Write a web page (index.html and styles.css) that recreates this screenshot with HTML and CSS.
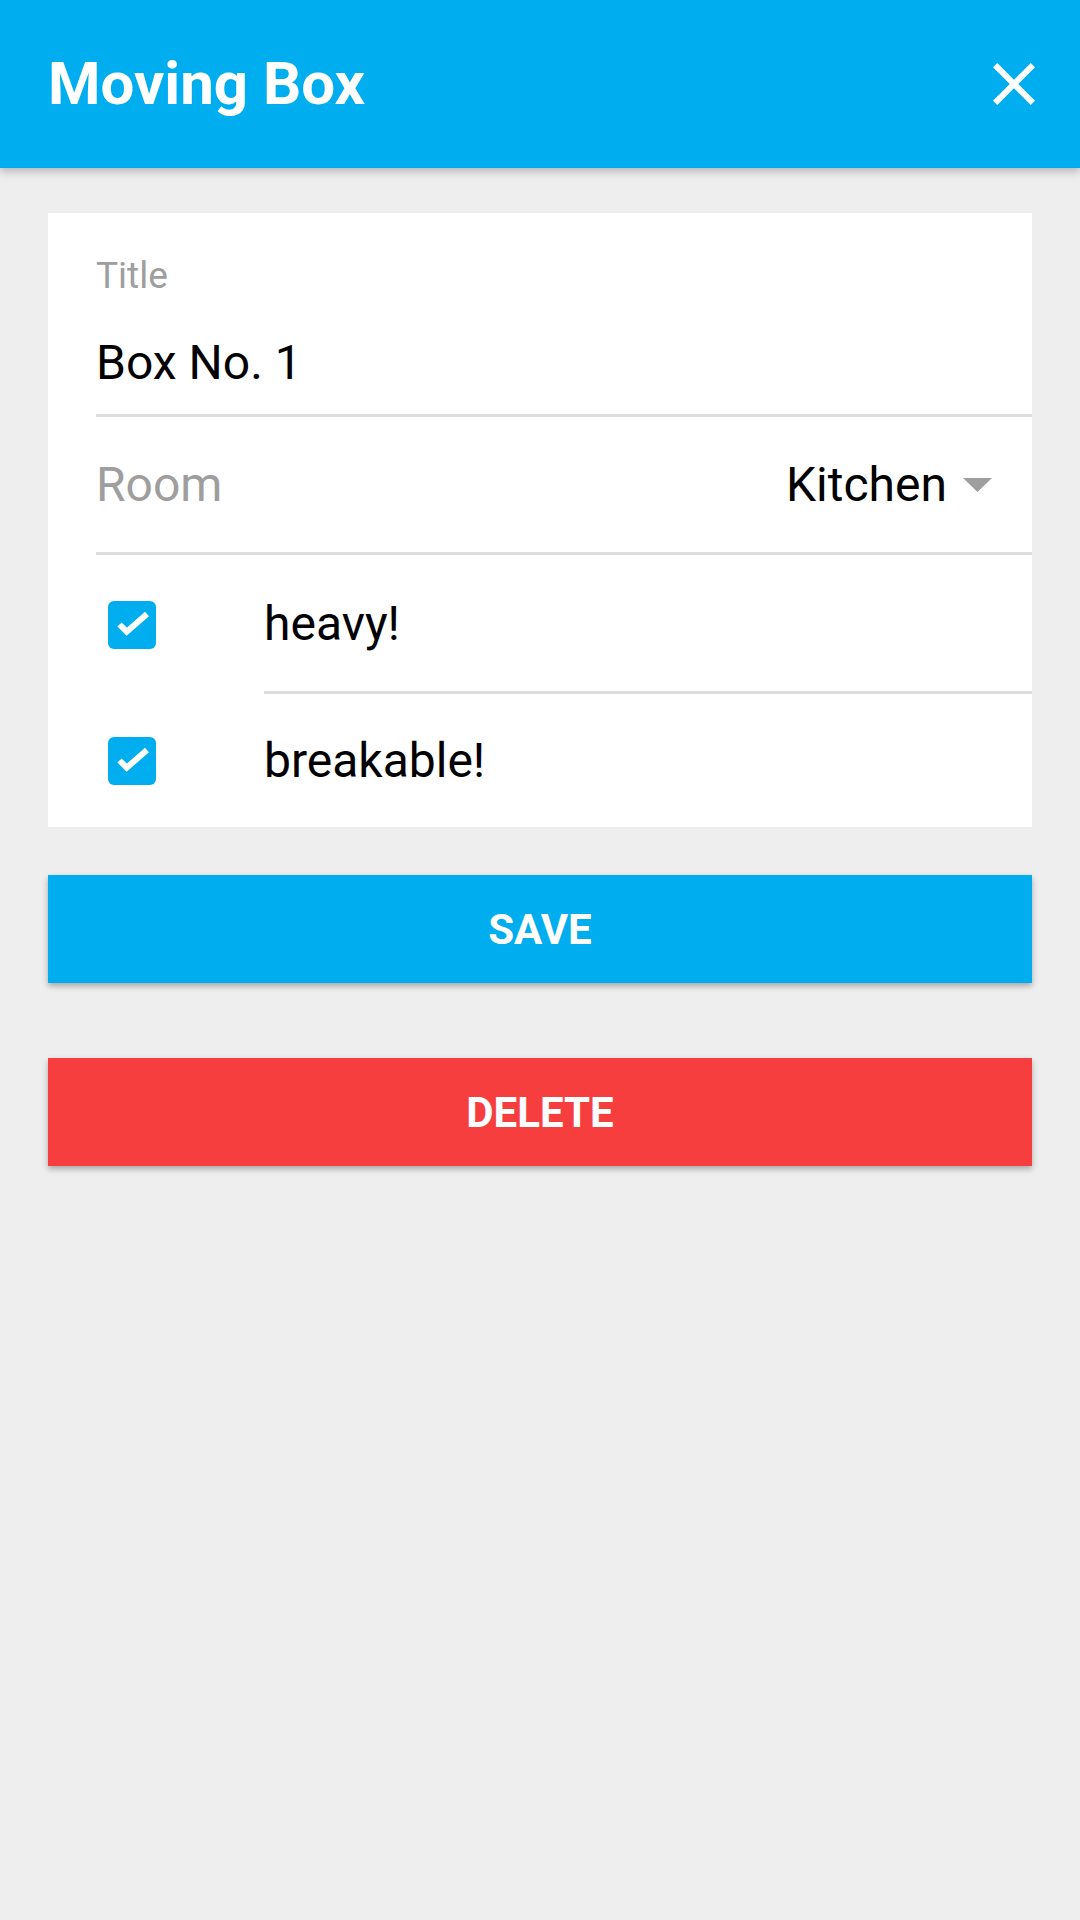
FILE: index.html
```html
<!DOCTYPE html>
<html>
<head>
<meta charset="utf-8">
<link rel="stylesheet" href="styles.css">
</head>
<body>
<header class="appbar">
  <h1 class="appbar-title">Moving Box</h1>
  <button class="close-btn" aria-label="Close">
    <svg viewBox="0 0 24 24" width="72" height="72"><path d="M19 6.41L17.59 5 12 10.59 6.41 5 5 6.41 10.59 12 5 17.59 6.41 19 12 13.41 17.59 19 19 17.59 13.41 12z" fill="#fff"/></svg>
  </button>
</header>
<main class="content">
  <section class="card">
    <div class="field title-field">
      <div class="field-label">Title</div>
      <div class="field-value">Box No. 1</div>
    </div>
    <div class="field room-field">
      <span class="room-label">Room</span>
      <span class="spinner">
        <span class="spinner-value">Kitchen</span>
        <svg class="spinner-arrow" viewBox="0 0 29 14" width="29" height="14"><polygon points="0,0 29,0 14.5,14" fill="#9e9e9e"/></svg>
      </span>
    </div>
    <div class="check-row">
      <span class="check-cell">
        <svg class="checkbox" viewBox="0 0 48 48" width="48" height="48"><rect x="0" y="0" width="48" height="48" rx="6" fill="#00aeef"/><polyline points="11.5,23.5 18.7,30.7 39,13" fill="none" stroke="#fff" stroke-width="6"/></svg>
      </span>
      <span class="check-label divided">heavy!</span>
    </div>
    <div class="check-row">
      <span class="check-cell">
        <svg class="checkbox" viewBox="0 0 48 48" width="48" height="48"><rect x="0" y="0" width="48" height="48" rx="6" fill="#00aeef"/><polyline points="11.5,23.5 18.7,30.7 39,13" fill="none" stroke="#fff" stroke-width="6"/></svg>
      </span>
      <span class="check-label">breakable!</span>
    </div>
  </section>
  <button class="action save">Save</button>
  <button class="action delete">Delete</button>
</main>
</body>
</html>
```
FILE: styles.css
```css
* { box-sizing: border-box; }
html, body {
  margin: 0;
  padding: 0;
  background: #eeeeee;
  font-family: Roboto, "Noto Sans", sans-serif;
  width: 1080px;
  min-height: 1920px;
}
.appbar {
  height: 168px;
  background: #00aeef;
  display: flex;
  align-items: center;
  justify-content: space-between;
  padding: 0 30px 0 48px;
  box-shadow: 0 4px 8px rgba(0,0,0,0.22);
  position: relative;
  z-index: 1;
}
.appbar-title {
  margin: 0;
  color: #fff;
  font-size: 60px;
  font-weight: 700;
  line-height: 70px;
}
.close-btn {
  background: none;
  border: 0;
  padding: 0;
  width: 72px;
  height: 72px;
  display: flex;
}
.content {
  padding: 45px 48px 0;
}
.card {
  background: #fff;
  padding-left: 48px;
}
.title-field {
  padding: 42px 0 23px;
  border-bottom: 3px solid #dddddd;
}
.field-label {
  font-size: 37px;
  line-height: 42px;
  color: #9e9e9e;
  margin-bottom: 38px;
}
.field-value {
  font-size: 48px;
  line-height: 56px;
  color: #000;
}
.room-field {
  height: 138px;
  border-bottom: 3px solid #dddddd;
  display: flex;
  align-items: center;
  justify-content: space-between;
  padding-right: 40px;
}
.room-label {
  font-size: 48px;
  color: #9e9e9e;
}
.spinner {
  display: flex;
  align-items: center;
  gap: 16px;
}
.spinner-value {
  font-size: 48px;
  color: #000;
}
.check-row {
  display: flex;
  align-items: stretch;
}
.check-cell {
  width: 168px;
  display: flex;
  align-items: center;
  padding-left: 12px;
}
.checkbox { display: block; }
.check-label {
  flex: 1;
  height: 136px;
  display: flex;
  align-items: center;
  font-size: 48px;
  color: #000;
}
.check-label.divided {
  height: 139px;
  border-bottom: 3px solid #dddddd;
}
.check-row:last-child .check-label {
  height: 133px;
}
.action {
  display: block;
  width: 100%;
  height: 108px;
  border: 0;
  margin: 48px 0 0;
  color: #fff;
  font-family: Roboto, "Noto Sans", sans-serif;
  font-size: 42px;
  font-weight: 700;
  text-transform: uppercase;
  box-shadow: 0 3px 6px rgba(0,0,0,0.3);
}
.save { background: #00aeef; }
.delete { background: #f63e3f; margin-top: 75px; }
```
